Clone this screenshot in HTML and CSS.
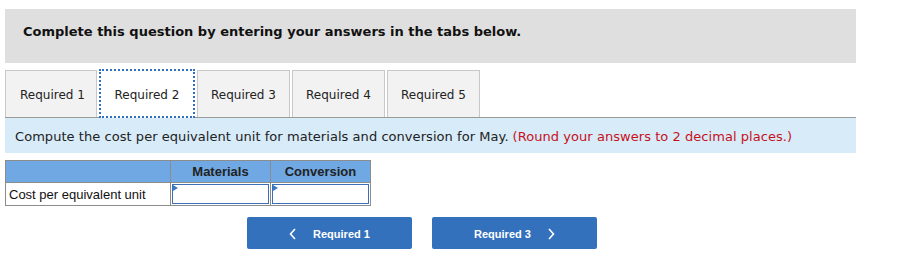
FILE: index.html
```html
<!DOCTYPE html>
<html>
<head>
<meta charset="utf-8">
<link rel="stylesheet" href="styles.css">
</head>
<body>
<div class="page">
  <div class="banner">Complete this question by entering your answers in the tabs below.</div>
  <div class="tabs">
    <div class="tab">Required 1</div>
    <div class="tab active">Required 2</div>
    <div class="tab">Required 3</div>
    <div class="tab">Required 4</div>
    <div class="tab">Required 5</div>
  </div>
  <div class="prompt">Compute the cost per equivalent unit for materials and conversion for May. <span class="note">(Round your answers to 2 decimal places.)</span></div>
  <table class="grid">
    <thead>
      <tr><th class="c1"></th><th class="c2">Materials</th><th class="c3">Conversion</th></tr>
    </thead>
    <tbody>
      <tr>
        <td class="label">Cost per equivalent unit</td>
        <td class="cell"><div class="field"><span class="flag"></span></div></td>
        <td class="cell"><div class="field"><span class="flag"></span></div></td>
      </tr>
    </tbody>
  </table>
  <div class="nav">
    <button class="btn"><svg class="chev" width="7" height="12" viewBox="0 0 7 12"><polyline points="6,1 1.5,6 6,11" fill="none" stroke="#fff" stroke-width="1.6"/></svg><span>Required 1</span></button>
    <button class="btn"><span>Required 3</span><svg class="chev" width="7" height="12" viewBox="0 0 7 12"><polyline points="1,1 5.5,6 1,11" fill="none" stroke="#fff" stroke-width="1.6"/></svg></button>
  </div>
</div>
</body>
</html>
```
FILE: styles.css
```css
html, body { margin: 0; padding: 0; background: #fff; }
.page { padding: 9px 0 0 5px; width: 851px; font-family: "DejaVu Sans", Verdana, sans-serif; }
.banner {
  height: 54px; box-sizing: border-box; background: #dfdfdf;
  padding: 15px 0 0 18px; font-weight: bold; font-size: 13px; line-height: 16px; color: #111;
}
.tabs {
  margin-top: 7px; display: flex; gap: 2px; border-bottom: 1px solid #9a9a9a; height: 47px;
}
.tab {
  width: 93px; box-sizing: border-box; height: 47px; background: #f2f2f2;
  border: 1px solid #c8c8c8; border-bottom: none; padding-top: 2px;
  display: flex; align-items: center; justify-content: center;
  font-size: 12px; color: #222;
}
.tab:first-child { width: 92px; padding-left: 3px; }
.tab.active {
  background: #fff; border: 2px dotted #2f6fc6; height: 49px; margin-top: -1px;
  width: 96px; position: relative; z-index: 1; padding-top: 2px;
}
.prompt {
  height: 35px; box-sizing: border-box; background: #d7ebf9;
  padding: 2px 0 0 10px; display: flex; align-items: center;
  font-size: 13px; letter-spacing: 0.05px; color: #222; white-space: nowrap;
}
.note { color: #c8101a; margin-left: 4px; }
.grid {
  margin-top: 7px; border-collapse: collapse; font-family: "Liberation Sans", Arial, sans-serif; font-size: 13px;
}
.grid th, .grid td { border: 1px solid #8c8c8c; padding: 0; height: 22px; box-sizing: border-box; }
.grid th { background: #6fa8e3; color: #222; font-weight: bold; text-align: center; }
.c1 { width: 165px; }
.c2 { width: 100px; }
.c3 { width: 100px; }
.label { padding-left: 3px !important; color: #111; }
.grid td.cell { padding: 1px; background: #fff; }
.field { height: 20px; box-sizing: border-box; border: 1px solid #3b6fb8; position: relative; }
.flag {
  position: absolute; left: 0; top: 0; width: 0; height: 0;
  border-top: 3px solid transparent; border-bottom: 3px solid transparent; border-left: 5px solid #3b78c8;
}
.nav { margin-top: 11px; display: flex; gap: 20px; padding-left: 242px; }
.btn {
  width: 165px; height: 32px; background: #3371bd; border: none; border-radius: 2px;
  color: #fff; font-family: "Liberation Sans", Arial, sans-serif; font-weight: bold; font-size: 11px;
  display: flex; align-items: center; justify-content: center; gap: 17px; padding: 1px 0 0;
}
.chev { display: block; }
```
